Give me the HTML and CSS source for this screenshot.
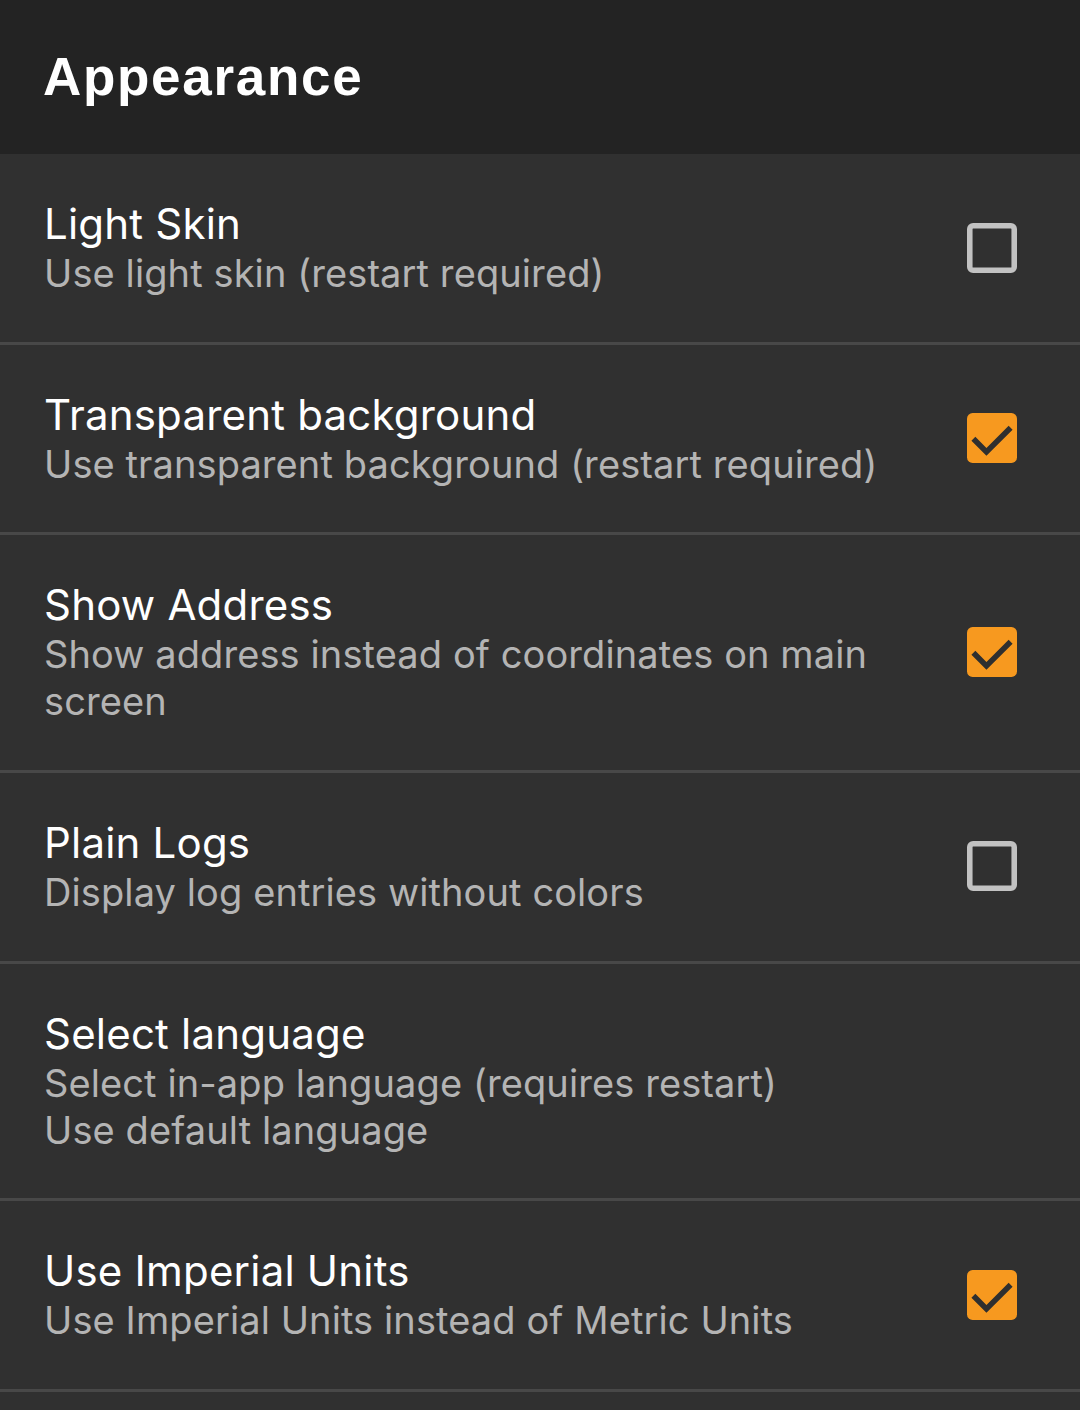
FILE: index.html
```html
<!DOCTYPE html>
<html>
<head>
<meta charset="utf-8">
<link rel="stylesheet" href="styles.css">
</head>
<body>
<div class="screen">
  <header class="bar"><h1 class="bar-title">Appearance</h1></header>
  <div class="list">
    <div class="row">
      <div class="texts">
        <div class="title">Light Skin</div>
        <div class="summary">Use light skin (restart required)</div>
      </div>
      <svg class="cb" viewBox="3 3 18 18"><rect class="cb-off" x="4" y="4" width="16" height="16" rx="1.2"/></svg>
    </div>
    <div class="row">
      <div class="texts">
        <div class="title">Transparent background</div>
        <div class="summary">Use transparent background (restart required)</div>
      </div>
      <svg class="cb" viewBox="3 3 18 18"><rect class="cb-on" x="3" y="3" width="18" height="18" rx="2"/><polyline class="tick" points="5.3,12.3 10,17 18.7,8.3"/></svg>
    </div>
    <div class="row">
      <div class="texts">
        <div class="title">Show Address</div>
        <div class="summary">Show address instead of coordinates on main screen</div>
      </div>
      <svg class="cb" viewBox="3 3 18 18"><rect class="cb-on" x="3" y="3" width="18" height="18" rx="2"/><polyline class="tick" points="5.3,12.3 10,17 18.7,8.3"/></svg>
    </div>
    <div class="row">
      <div class="texts">
        <div class="title">Plain Logs</div>
        <div class="summary">Display log entries without colors</div>
      </div>
      <svg class="cb" viewBox="3 3 18 18"><rect class="cb-off" x="4" y="4" width="16" height="16" rx="1.2"/></svg>
    </div>
    <div class="row">
      <div class="texts">
        <div class="title">Select language</div>
        <div class="summary">Select in-app language (requires restart)<br>Use default language</div>
      </div>
    </div>
    <div class="row">
      <div class="texts">
        <div class="title">Use Imperial Units</div>
        <div class="summary">Use Imperial Units instead of Metric Units</div>
      </div>
      <svg class="cb" viewBox="3 3 18 18"><rect class="cb-on" x="3" y="3" width="18" height="18" rx="2"/><polyline class="tick" points="5.3,12.3 10,17 18.7,8.3"/></svg>
    </div>
    <div class="row"></div>
  </div>
</div>
</body>
</html>
```

FILE: styles.css
```css
html, body {
  margin: 0;
  padding: 0;
  background: #303030;
}
.screen {
  width: 1080px;
  height: 1410px;
  overflow: hidden;
  background: #303030;
  font-family: Inter, Roboto, sans-serif;
}
.bar {
  height: 154px;
  background: #232323;
  display: flex;
  align-items: center;
  padding-left: 43px;
  box-sizing: border-box;
}
.bar-title {
  margin: 0 0 2px 0;
  font-family: "Liberation Sans", Arial, sans-serif;
  font-weight: bold;
  font-size: 53px;
  letter-spacing: 1.7px;
  color: #ffffff;
}
.list {
  display: flex;
  flex-direction: column;
}
.row {
  display: flex;
  align-items: center;
  padding: 44px 63px 44.67px 44px;
  border-bottom: 3px solid #484848;
}
.texts {
  flex: 1;
  min-width: 0;
}
.title {
  font-size: 42px;
  line-height: 52px;
  letter-spacing: 0.2px;
  color: #ffffff;
}
.summary {
  font-size: 38px;
  line-height: 47px;
  letter-spacing: 0.1px;
  color: #b4b4b4;
  padding-right: 60px;
}
.cb {
  width: 50px;
  height: 50px;
  flex: none;
  display: block;
}
.cb-off {
  fill: none;
  stroke: #c2c2c2;
  stroke-width: 2;
}
.cb-on {
  fill: #f7991f;
}
.tick {
  fill: none;
  stroke: #2f2f2f;
  stroke-width: 2;
}
```
